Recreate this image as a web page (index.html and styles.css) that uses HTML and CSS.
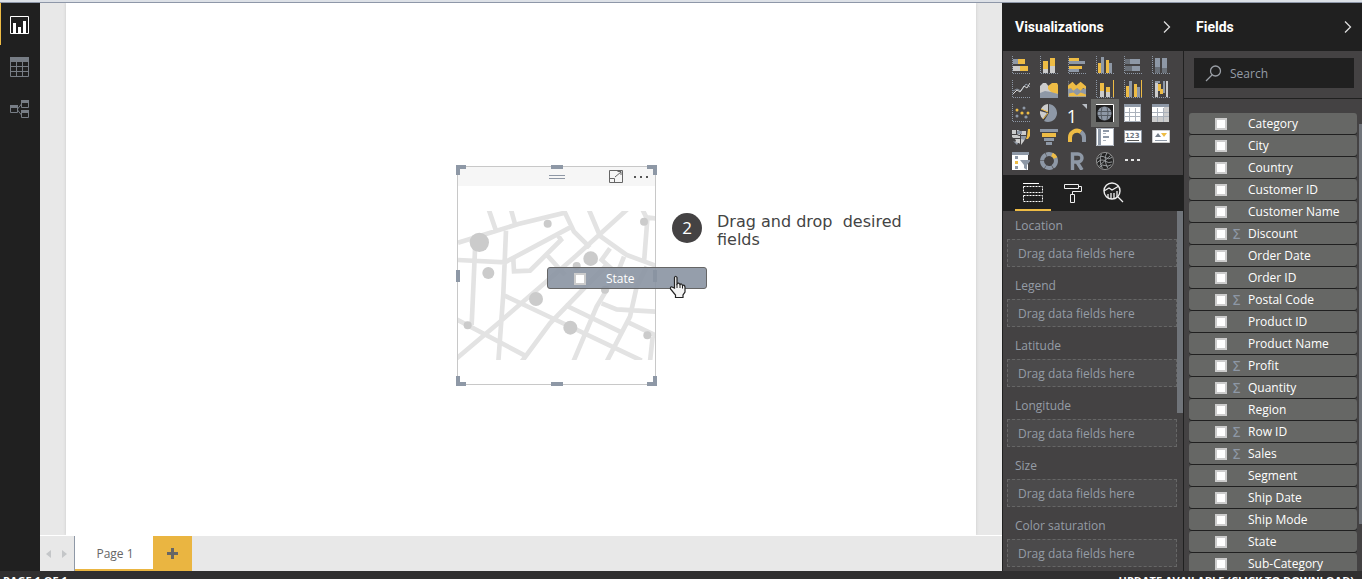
FILE: index.html
```
<!DOCTYPE html>
<html lang="en">
<head>
<meta charset="utf-8">
<title>Report</title>
<link rel="stylesheet" href="styles.css">
</head>
<body>
<div class="top-strip"></div>
<div class="workspace">
  <nav class="rail" aria-label="Views">
    <button class="rail-btn active" aria-label="Report"><svg width="20" height="20" viewBox="0 0 20 20"><path d="M.5 1.500h18v17H.5z" fill="none" stroke="#fff"/><path d="M3 8h3v10H3zM8 12h3v6H8zM13 6h3v12h-3z" fill="#fff"/></svg></button>
    <button class="rail-btn" aria-label="Data"><svg width="20" height="20" viewBox="0 0 20 20"><path d="M0 0h19v5H0z" fill="#777d85"/><path d="M.5 .5h18v19H.5zM0 9.500h18M0 14.500h18M6.500 5v15M12.500 5v15" fill="none" stroke="#777d85"/></svg></button>
    <button class="rail-btn" aria-label="Relationships"><svg width="20" height="20" viewBox="0 0 20 20"><path d="M.5 7.500h7v6h-7zM11.500 2.500h7v6h-7zM11.500 12.500h7v6h-7zM7.500 10l4-5M7.500 11l4 5" fill="none" stroke="#777d85"/><path d="M0 6h8v3H0zM11 1h8v3h-8zM11 11h8v3h-8z" fill="#777d85"/></svg></button>
  </nav>

  <main class="report">
    <div class="canvas">
      <div class="page">
        <section class="visual" aria-label="Map">
          <header class="visual-head">
            <svg class="grip" width="18" height="6" viewBox="0 0 18 6"><path d="M1 1.500h16M1 4.500h16" stroke="#8e97a5"/></svg>
            <button class="icon-btn focus" aria-label="Focus mode"><svg width="15" height="13" viewBox="0 0 15 13"><path d="M1.500 .5h13v12h-13zM1 8.500h5.500v4M7 7l6-5M9.500 1.500H13V5" fill="none" stroke="#666"/></svg></button>
            <button class="icon-btn more" aria-label="More options"><svg width="16" height="4" viewBox="0 0 16 4"><path d="M1 1h2v2H1zM7 1h2v2H7zM13 1h2v2h-2z" fill="#555"/></svg></button>
          </header>
          <svg class="map" viewBox="24 153 591 447">
            <g fill="none" stroke="#e3e3e3" stroke-width="14">
              <path d="M24 248L205 192 345 158 372 215 420 262M115 145L138 212M182 145L195 192M24 300L165 307 365 200M168 212L160 400 145 605M75 270L65 495M415 145L450 228 530 285 620 318M535 145L370 295 150 485 20 595M578 150L592 178 582 308M590 172L620 176M325 228L333 240 240 332 192 334 190 298M288 282L345 345M480 265L455 300 500 340M522 290L508 325M160 405L350 495 575 602M20 478L225 587M215 605L300 490 470 315M370 605L440 440 500 340M470 605L540 470 560 380 590 320M345 435L510 515M455 430L500 448 620 455M530 485L620 528M608 530L600 605"/>
            </g>
            <g fill="#cbcbcb"><circle cx="88" cy="247" r="29"/><circle cx="293" cy="191" r="12"/><circle cx="115" cy="339" r="18"/><circle cx="422" cy="296" r="22"/><circle cx="380" cy="318" r="12"/><circle cx="582" cy="185" r="12"/><circle cx="258" cy="417" r="21"/><circle cx="53" cy="496" r="12"/><circle cx="361" cy="503" r="21"/><circle cx="592" cy="526" r="12"/><circle cx="465" cy="389" r="12"/></g>
          </svg>
          <i class="handle nw"></i><i class="handle n"></i><i class="handle ne"></i><i class="handle w"></i><i class="handle e"></i><i class="handle sw"></i><i class="handle s"></i><i class="handle se"></i>
        </section>
        <label class="drag-chip"><input type="checkbox" class="check"><span>State</span></label>
        <svg class="cursor" width="18" height="24" viewBox="0 0 18 24"><path d="M5.500 13V2.500Q6.500 0 8 2.500V9Q9.500 7 11 9.500 12.500 8 13.500 10.500 15.500 9.500 16 12V17L14 20V22.500H6.500V20L1.500 14Q1 11.500 3 12Z" fill="#f4f4f4" stroke="#222" stroke-width="1.200"/><path d="M8 9v4M11 9.500V13M13.500 10.500V13.500" stroke="#222"/></svg>
        <div class="callout"><span class="step">2</span><p>Drag and drop&nbsp; desired fields</p></div>
      </div>
    </div>
    <div class="page-bar">
      <div class="pager"><button aria-label="Previous page"><svg width="5" height="8" viewBox="0 0 5 8"><path d="M5 0v8L0 4z" fill="#c4c6c8"/></svg></button><button aria-label="Next page"><svg width="5" height="8" viewBox="0 0 5 8"><path d="M0 0v8l5-4z" fill="#c4c6c8"/></svg></button></div>
      <button class="page-tab">Page 1</button>
      <button class="add-page" aria-label="New page"><svg width="12" height="12" viewBox="0 0 12 12"><path d="M5.500 0v11M0 5.500h11" stroke="#666" stroke-width="3"/></svg></button>
    </div>
  </main>

  <aside class="viz-pane">
    <header class="pane-head"><h2>Visualizations</h2><button class="icon-btn" aria-label="Collapse"><svg width="8" height="14" viewBox="0 0 8 14"><path d="M1 1.500L6.500 7 1 12.500" fill="none" stroke="#ddd" stroke-width="1.300"/></svg></button></header>
    <div class="viz-grid">
      <button aria-label="Stacked bar chart"><svg viewBox="0 0 18 18"><path class="axis" d="M.5 0v17.500H18"/><path class="y" d="M6 3h7v5H6zM8 10h8v5H8z"/><path class="g" d="M1 3h5v5H1z"/><path class="l" d="M1 10h7v5H1z"/></svg></button>
      <button aria-label="Stacked column chart"><svg viewBox="0 0 18 18"><path class="axis" d="M.5 0v17.500H18"/><path class="y" d="M3 5h5v8H3zM10 2h5v8h-5z"/><path class="l" d="M3 13h5v4H3zM10 10h5v7h-5z"/></svg></button>
      <button aria-label="Clustered bar chart"><svg viewBox="0 0 18 18"><path class="axis" d="M.5 0v17.500H18"/><path class="y" d="M1 2h10v3H1zM1 10h13v3H1z"/><path class="g" d="M1 5h16v3H1zM1 13h10v3H1z"/></svg></button>
      <button aria-label="Clustered column chart"><svg viewBox="0 0 18 18"><path class="axis" d="M.5 0v17.500H18"/><path class="y" d="M2 7h3v10H2zM10 4h3v13h-3z"/><path class="g" d="M5 1h3v16H5zM13 7h3v10h-3z"/></svg></button>
      <button aria-label="100% stacked bar chart"><svg viewBox="0 0 18 18"><path class="axis" d="M.5 0v17.500H18"/><path class="g" d="M6 3h10v5H6zM8 10h8v5H8z"/><path class="d" d="M1 3h5v5H1zM1 10h7v5H1z"/></svg></button>
      <button aria-label="100% stacked column chart"><svg viewBox="0 0 18 18"><path class="axis" d="M.5 0v17.500H18"/><path class="g" d="M3 2h5v9H3zM10 2h5v10h-5z"/><path class="d" d="M3 11h5v6H3zM10 12h5v5h-5z"/></svg></button>

      <button aria-label="Line chart"><svg viewBox="0 0 18 18"><path class="axis" d="M.5 0v17.500H18"/><path class="gl" d="M1 11l4-2 4 2 5-7 4 3"/><path d="M1 14l4-4 3 2 4-6 3 2 3-5" fill="none" stroke="#d8d8d8"/></svg></button>
      <button aria-label="Area chart"><svg viewBox="0 0 18 18"><path class="l" d="M0 6l3-3h3l4 5 8 4v6H0z"/><path class="y" d="M8 6l4-3h5l1 2v9l-6-1-4-4z"/><path class="g" d="M0 13l5-2 6 1 7 2v4H0z"/></svg></button>
      <button aria-label="Stacked area chart"><svg viewBox="0 0 20 18"><path class="axis" d="M.5 0v17.500H20"/><path class="g" d="M0 6l5 3 4-2 5 3 6-3v11H0z"/><path class="y" d="M0 5l5-4 4 4 5-4 6 5v3l-3-1-3 3-4-3-4 3-3-3-3 1zM1 17v-3l5-1 4 3 4-3 6 2v2z"/></svg></button>
      <button aria-label="Line and stacked column chart"><svg viewBox="0 0 18 18"><path class="axis" d="M.5 0v17.500H18"/><path class="y" d="M4 3h4v8H4zM10 7h4v5h-4zM17 0h1v17h-1z"/><path class="l" d="M4 11h4v6H4zM10 12h4v5h-4z"/></svg></button>
      <button aria-label="Line and clustered column chart"><svg viewBox="0 0 18 18"><path class="axis" d="M.5 0v17.500H18"/><path class="y" d="M2 6h3v11H2zM10 4h3v13h-3zM17 0h1v17h-1z"/><path class="g" d="M5 1h3v16H5zM13 7h3v10h-3z"/></svg></button>
      <button aria-label="Waterfall chart"><svg viewBox="0 0 18 18"><path class="axis" d="M.5 0v17.500H18"/><path class="l" d="M3 1h3v16H3zM14 1h2v16h-2z"/><path class="y" d="M6 4h3v7H6zM8 9h3v5H8z"/><path class="g" d="M11 1h2v12h-2zM3 1h5v2H3z"/></svg></button>

      <button aria-label="Scatter chart"><svg viewBox="0 0 18 18"><path class="axis" d="M.5 0v17.500H18"/><g class="y"><circle cx="5" cy="6" r="1.500"/><circle cx="10" cy="9" r="1.600"/><circle cx="16" cy="9" r="1.500"/></g><g class="g"><circle cx="12" cy="4" r="1.500"/><circle cx="5" cy="12" r="1.500"/><circle cx="14" cy="13" r="1.600"/></g></svg></button>
      <button aria-label="Pie chart"><svg viewBox="0 0 18 18"><path class="g" d="M9 0A9 9 0 1 1 4 17L9 9z"/><path class="l" d="M8 0v8L1 5A9 9 0 0 1 8 0zM0 7l7 2-4 6A9 9 0 0 1 0 7z"/><path d="M8 8L1 5M8 9l-5 6" stroke="#eebc45"/></svg></button>
      <button aria-label="Card" class="one"><span>1</span><svg class="corner" width="5" height="5" viewBox="0 0 5 5"><path d="M0 0h5v5z" fill="#b9bec5"/></svg></button>
      <button aria-label="Map" class="selected"><svg viewBox="0 0 18 18"><path fill="#202020" d="M0 0h18v18H0z"/><path d="M0 .5h17.500V18" fill="none" stroke="#fff"/><circle class="g" cx="8.500" cy="9.500" r="7"/><path d="M2 7.500h13M2 11.500h13M6 3q-2 6 0 13M11 3q2 6 0 13" fill="none" stroke="#555b63"/></svg></button>
      <button aria-label="Table"><svg viewBox="0 0 18 18"><path fill="#fff" d="M0 1h17v17H0z"/><path class="g" d="M0 0h17v3H0z"/><path class="grid-line" d="M0 8.500h17M0 12.500h17M5.500 4v14M11.500 4v14M.5 3v14.500h16V3"/></svg></button>
      <button aria-label="Matrix"><svg viewBox="0 0 18 18"><path fill="#fff" d="M0 1h17v17H0z"/><path class="g" d="M0 0h17v3H0z"/><path class="l" d="M12 3h5v15H0v-5h12z"/><path class="grid-line" d="M0 8.500h17M0 12.500h17M5.500 4v14M11.500 4v14"/></svg></button>

      <button aria-label="Filled map"><svg viewBox="0 0 18 18"><path class="l" d="M0 2h6l2 1h6v5l-2 5-3 4-2-2H3l1-3-4-3z"/><path class="y" d="M16 1h2v7l-2 3h-2l1-3z"/><path class="g" d="M5 3h5v3H5zM9 8h5l-1 4-4-1zM1 13l5 2-1 2z"/><path d="M0 6.500h5l2 1h7M0 10.500h8M8.500 6v12M4.500 2v4" fill="none" stroke="#444243"/></svg></button>
      <button aria-label="Funnel"><svg viewBox="0 0 18 18"><path class="g" d="M0 1h18v3H0zM4 10h10v3H4zM6 14h6v3H6z"/><path class="y" d="M2 5h14v4H2z"/></svg></button>
      <button aria-label="Gauge"><svg viewBox="0 0 18 18"><path d="M2 14V10a7 7 0 0 1 11-6" fill="none" stroke="#eebc45" stroke-width="4"/><path d="M13 4a7 7 0 0 1 3 6v4" fill="none" stroke="#8e98a6" stroke-width="4"/></svg></button>
      <button aria-label="Multi-row card"><svg viewBox="0 0 18 18"><path fill="#fff" d="M0 0h18v18H0z"/><path class="g" d="M2 1h3v16H2zM7 2h6v2H7zM7 8h6v2H7z"/><path class="grid-line" d="M.5 .5h17v17H.5zM7 5.500h3M7 12.500h3"/></svg></button>
      <button aria-label="KPI numbers"><svg viewBox="0 0 18 18"><path d="M.5 2.500h17v12H.5z" fill="#fff" stroke="#8e98a6"/><text x="1" y="10" class="num">123</text><path d="M3 12.500h12" stroke="#555"/></svg></button>
      <button aria-label="KPI"><svg viewBox="0 0 18 18"><path d="M.5 2.500h17v12H.5z" fill="#fff" stroke="#ccc"/><path d="M3 9l3-4 3 4z" fill="#777f8a"/><path class="y" d="M9 5h6l-3 4z"/><path d="M3 12.500h12" stroke="#8e98a6"/></svg></button>

      <button aria-label="Slicer"><svg viewBox="0 0 18 18"><path fill="#fff" d="M0 1h16v17H0z"/><path class="g" d="M0 0h17v3H0zM3 4h3v3H3zM3 14h3v3H3zM8 8h11l-4 5v5l-3-2v-3z"/><path class="y" d="M3 9h3v3H3z"/></svg></button>
      <button aria-label="Donut chart"><svg viewBox="0 0 18 18"><circle cx="9" cy="9" r="7" fill="none" stroke="#8e98a6" stroke-width="4" stroke-dasharray="7 .5"/><path d="M12 2.500A7 7 0 0 1 15.500 6" fill="none" stroke="#eebc45" stroke-width="4"/></svg></button>
      <button aria-label="R script visual"><svg viewBox="0 0 18 18"><path d="M4.500 18V2H10a3.800 3.800 0 0 1 0 8H5M9 10l5 8" fill="none" stroke="#8e98a6" stroke-width="3.400"/></svg></button>
      <button aria-label="ArcGIS map"><svg viewBox="0 0 20 20"><circle cx="10" cy="10" r="9.500" fill="#222" stroke="#999"/><path d="M1 8q5-5 9-2t8 0M1 12q5-5 9-2t8 1M4 17q3-4 6-2t7-1M6 2q-3 8 1 16M12 1q-4 7 1 17M16 4L4 15" fill="none" stroke="#a2a5a8"/></svg></button>
      <button aria-label="Import visual"><svg viewBox="0 0 18 18"><path d="M1 7h3v2H1zM7 7h3v2H7zM13 7h3v2h-3z" fill="#e6e6e6"/></svg></button>
    </div>
    <div class="pane-tabs">
      <button class="active" aria-label="Fields"><svg width="20" height="20" viewBox="0 0 20 20"><path d="M0 .5h16" stroke="#fff"/><path d="M.5 3.500h19v6H.5zM.5 12.500h19v6H.5z" fill="none" stroke="#fff" stroke-dasharray="2 1"/></svg></button>
      <button aria-label="Format"><svg width="20" height="20" viewBox="0 0 20 20"><path d="M1.500 1.500h14v4h-14zM15.500 3.500h3v5h-9v3M7.500 11.500h4v8h-4z" fill="none" stroke="#eee"/></svg></button>
      <button aria-label="Analytics"><svg width="22" height="22" viewBox="0 0 22 22"><circle cx="10" cy="9" r="8" fill="none" stroke="#eee" stroke-width="1.400"/><path d="M16 15l5 5M2 9l5-3 3 2 7-4M6 16v-4M9 17v-6M12 17v-6M15 15V9" fill="none" stroke="#eee" stroke-width="1.300"/></svg></button>
    </div>
    <div class="wells">
      <section><h3>Location</h3><div class="well">Drag data fields here</div></section>
      <section><h3>Legend</h3><div class="well">Drag data fields here</div></section>
      <section><h3>Latitude</h3><div class="well">Drag data fields here</div></section>
      <section><h3>Longitude</h3><div class="well">Drag data fields here</div></section>
      <section><h3>Size</h3><div class="well">Drag data fields here</div></section>
      <section><h3>Color saturation</h3><div class="well">Drag data fields here</div></section>
      <div class="thumb"></div>
    </div>
  </aside>

  <aside class="fields-pane">
    <header class="pane-head"><h2>Fields</h2><button class="icon-btn" aria-label="Collapse"><svg width="8" height="14" viewBox="0 0 8 14"><path d="M1 1.500L6.500 7 1 12.500" fill="none" stroke="#ddd" stroke-width="1.300"/></svg></button></header>
    <div class="search-area"><label class="search"><svg width="17" height="17" viewBox="0 0 17 17"><circle cx="10.500" cy="6" r="5" fill="none" stroke="#9a9fa6" stroke-width="1.300"/><path d="M7 10L1 16" stroke="#9a9fa6" stroke-width="1.300"/></svg><input type="text" placeholder="Search" aria-label="Search"></label></div>
    <div class="field-list">
      <label><input type="checkbox" class="check"><i></i>Category</label>
      <label><input type="checkbox" class="check"><i></i>City</label>
      <label><input type="checkbox" class="check"><i></i>Country</label>
      <label><input type="checkbox" class="check"><i></i>Customer ID</label>
      <label><input type="checkbox" class="check"><i></i>Customer Name</label>
      <label><input type="checkbox" class="check"><i>Σ</i>Discount</label>
      <label><input type="checkbox" class="check"><i></i>Order Date</label>
      <label><input type="checkbox" class="check"><i></i>Order ID</label>
      <label><input type="checkbox" class="check"><i>Σ</i>Postal Code</label>
      <label><input type="checkbox" class="check"><i></i>Product ID</label>
      <label><input type="checkbox" class="check"><i></i>Product Name</label>
      <label><input type="checkbox" class="check"><i>Σ</i>Profit</label>
      <label><input type="checkbox" class="check"><i>Σ</i>Quantity</label>
      <label><input type="checkbox" class="check"><i></i>Region</label>
      <label><input type="checkbox" class="check"><i>Σ</i>Row ID</label>
      <label><input type="checkbox" class="check"><i>Σ</i>Sales</label>
      <label><input type="checkbox" class="check"><i></i>Segment</label>
      <label><input type="checkbox" class="check"><i></i>Ship Date</label>
      <label><input type="checkbox" class="check"><i></i>Ship Mode</label>
      <label><input type="checkbox" class="check"><i></i>State</label>
      <label><input type="checkbox" class="check"><i></i>Sub-Category</label>
      <div class="thumb"></div>
    </div>
  </aside>
</div>
<footer class="status"><span>PAGE 1 OF 1</span><span>UPDATE AVAILABLE (CLICK TO DOWNLOAD)</span></footer>
</body>
</html>
```
FILE: styles.css
```
* { box-sizing: border-box; }
html, body { height: 100%; margin: 0; }
body {
  display: flex;
  flex-direction: column;
  overflow: hidden;
  background: #202020;
  font: 12px/16px "Open Sans", sans-serif;
}
button {
  display: flex;
  align-items: center;
  justify-content: center;
  padding: 0;
  border: 0;
  background: none;
  color: inherit;
  font: inherit;
}
svg { display: block; }
h2, h3, p { margin: 0; }

.top-strip {
  flex: none;
  height: 3px;
  background: #dde1e7;
  border-bottom: 1px solid #8e97a8;
}
.workspace { flex: 1; min-height: 0; display: flex; }

.rail { flex: none; width: 40px; background: #202020; }
.rail-btn { width: 100%; height: 42px; padding: 2px 2px 0 0; border-left: 1px solid transparent; }
.rail-btn.active { border-left-color: #eebc45; }

.report { flex: 1; min-width: 0; display: flex; flex-direction: column; background: #fff; }
.canvas { flex: 1; min-height: 0; display: flex; padding: 0 26px; background: #e8e8e8; }
.page { flex: 1; position: relative; background: #fff; box-shadow: 0 0 3px #c8c8c8; clip-path: inset(0 -4px); }

.visual {
  position: absolute;
  left: 391px;
  top: 163px;
  width: 199px;
  height: 219px;
  border: 1px solid #c8c8c8;
}
.visual-head {
  display: grid;
  grid-template-columns: 1fr 18px 1fr;
  align-items: center;
  height: 19px;
  background: #f6f6f6;
}
.visual-head > * { grid-row: 1; }
.grip { grid-column: 2; }
.focus, .more { grid-column: 3; justify-self: end; }
.focus { margin-right: 32px; }
.more { margin-right: 6px; }
.map { width: 100%; margin-top: 25px; }
.handle { position: absolute; background: #8e98a6; }
.nw, .ne, .sw, .se { width: 10px; height: 10px; background: none; border: 0 solid #8e98a6; }
.nw { left: -2px; top: -2px; border-width: 4px 0 0 4px; }
.ne { right: -2px; top: -2px; border-width: 4px 4px 0 0; }
.sw { left: -2px; bottom: -2px; border-width: 0 0 4px 4px; }
.se { right: -2px; bottom: -2px; border-width: 0 4px 4px 0; }
.n, .s { left: calc(50% - 6px); width: 12px; height: 4px; }
.w, .e { top: calc(50% - 6px); width: 4px; height: 12px; }
.n { top: -2px; } .s { bottom: -2px; } .w { left: -2px; } .e { right: -2px; }

.check {
  appearance: none;
  flex: none;
  width: 12px;
  height: 12px;
  margin: 0;
  border: 2px solid #ccc;
  background: #fff;
}
.drag-chip {
  position: absolute;
  left: 481px;
  top: 264px;
  display: flex;
  align-items: center;
  gap: 20px;
  width: 160px;
  height: 22px;
  padding: 2px 0 0 26px;
  border: 1px solid #666;
  border-radius: 3px;
  background: rgba(138, 148, 162, .9);
  color: #fff;
}
.cursor { position: absolute; left: 603px; top: 272px; }
.callout {
  position: absolute;
  left: 606px;
  top: 210px;
  display: flex;
  gap: 15px;
  color: #444;
  font: 16px/18px "DejaVu Sans", sans-serif;
}
.callout p { width: 200px; }
.step {
  width: 30px;
  height: 30px;
  border-radius: 50%;
  background: #444243;
  color: #fff;
  font: 17px/30px "Open Sans", sans-serif;
  text-align: center;
}

.page-bar { flex: none; display: flex; height: 35px; margin-top: 1px; background: #e8e8e8; }
.pager { display: flex; align-items: center; justify-content: space-between; width: 35px; padding: 0 7px 0 6px; border-right: 1px solid #8e98a6; }
.page-tab { width: 78px; padding: 2px 0 0 2px; background: #fff; border-bottom: 2px solid #eab541; color: #666; }
.add-page { width: 39px; background: #eab541; }

.viz-pane, .fields-pane { flex: none; display: flex; flex-direction: column; background: #444243; }
.viz-pane { width: 182px; border: solid #202020; border-width: 0 1px; }
.fields-pane { width: 178px; }
.pane-head {
  flex: none;
  display: flex;
  align-items: center;
  justify-content: space-between;
  height: 48px;
  padding: 0 12px;
  background: #202020;
  color: #fff;
}
.fields-pane .pane-head { padding-right: 10px; }
.pane-head h2 { font: bold 14px/18px Roboto, sans-serif; }

.viz-grid {
  flex: none;
  display: grid;
  grid-template-columns: repeat(6, 28px);
  grid-auto-rows: 24px;
  height: 124px;
  padding: 2px 4px;
}
.viz-grid svg { width: 18px; height: 18px; }
.viz-grid .selected { background: #696a68; box-shadow: 0 2px #696a68, 0 -2px #696a68; }
.axis { fill: none; stroke: #8e98a6; stroke-dasharray: 1 1; }
.y { fill: #eebc45; }
.g { fill: #8e98a6; }
.l { fill: #ccc; }
.d { fill: #6a7078; }
.gl { fill: none; stroke: #8e98a6; }
.grid-line { fill: none; stroke: #aab1bb; }
.num { font: bold 7px "DejaVu Sans", sans-serif; fill: #6d7682; }
.one { align-items: flex-start; gap: 5px; color: #fff; font: 18px/30px "Open Sans", sans-serif; }
.viz-grid .corner { width: 5px; height: 5px; margin-top: 3px; }

.pane-tabs { flex: none; display: flex; gap: 4px; height: 36px; padding-left: 12px; background: #202020; }
.pane-tabs button { width: 36px; padding-top: 2px; border-bottom: 2px solid transparent; }
.pane-tabs .active { border-color: #eebc45; }

.wells { flex: 1; min-height: 0; position: relative; overflow: hidden; padding: 7px 6px 0 4px; color: #959ca6; }
.wells section { height: 60px; }
.wells h3 { margin: 0 0 5px 8px; font: inherit; }
.well { height: 28px; padding: 6px 10px; border: 1px dashed #666; background: #4b4a4b; }
.thumb { position: absolute; right: 0; background: #70747a; }
.wells .thumb { top: 0; width: 6px; height: 202px; }

.search-area { flex: none; height: 48px; padding: 7px 8px 0 10px; border-bottom: 1px solid #202020; }
.search { display: flex; align-items: center; gap: 8px; height: 30px; padding: 0 0 0 11px; background: #202020; }
.search input { flex: 1; min-width: 0; padding: 2px 0 0; border: 0; outline: 0; background: none; color: #eee; font: inherit; }
.search input::placeholder { color: #959ca6; opacity: 1; }
.field-list { flex: 1; min-height: 0; position: relative; overflow: hidden; padding: 14px 5px 0; }
.field-list label {
  display: flex;
  align-items: center;
  height: 21px;
  margin-bottom: 1px;
  padding-left: 26px;
  border-radius: 3px;
  background: #666765;
  box-shadow: 0 1px #202020;
  color: #fff;
}
.field-list i { width: 21px; padding-left: 5px; color: #8e98a6; font: 14px/16px "DejaVu Sans", sans-serif; }
.field-list .thumb { top: 25px; width: 3px; height: 400px; }

.status {
  flex: none;
  display: flex;
  justify-content: space-between;
  height: 8px;
  overflow: hidden;
  padding: 3px 8px 0 3px;
  background: #302f30;
  color: #fff;
  font: bold 11px/14px "Open Sans", sans-serif;
}
```
